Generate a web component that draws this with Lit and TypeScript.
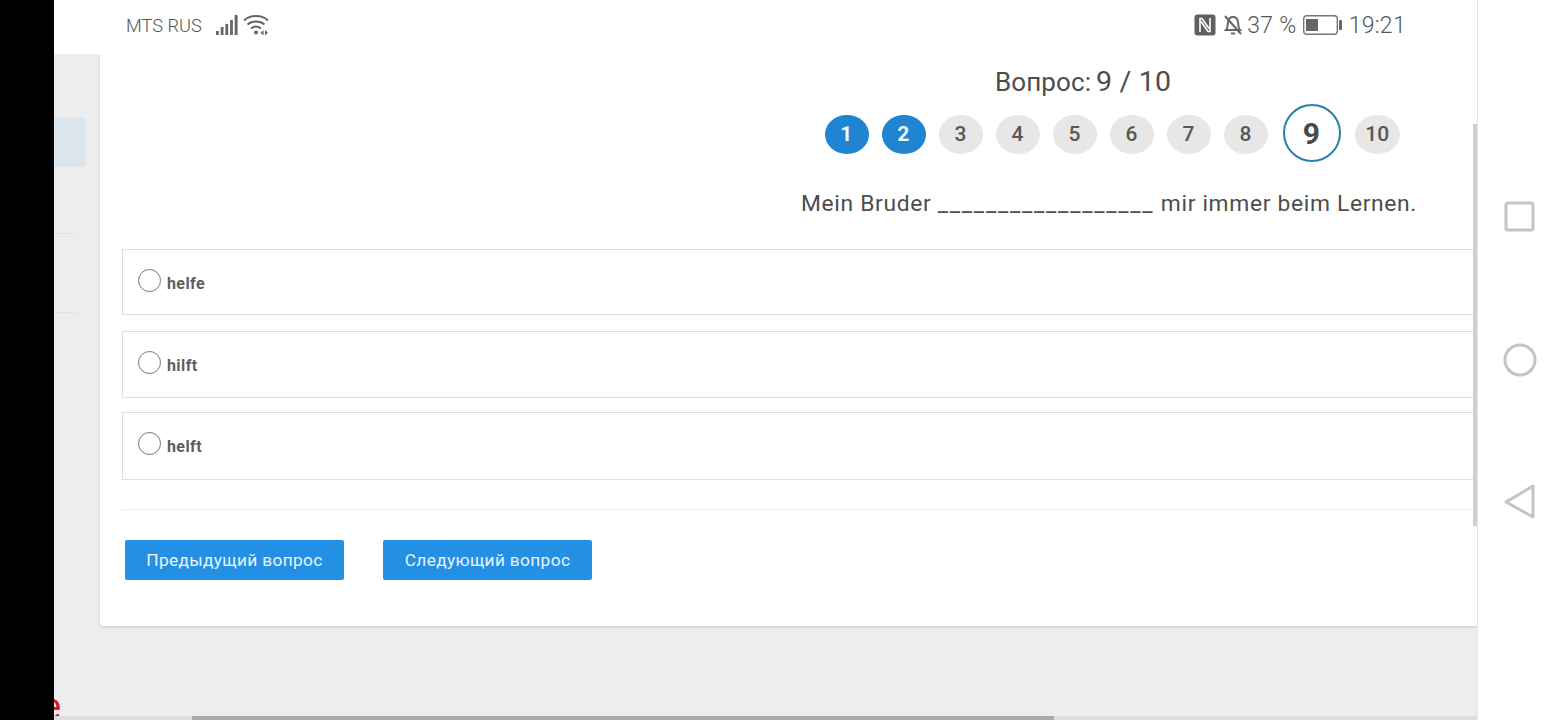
import { LitElement, html, css } from "lit";
import { customElement } from "lit/decorators.js";

@customElement("app-root")
export class AppRoot extends LitElement {
  static styles = css`
    :host { display: flex; width: 1560px; height: 720px; overflow: hidden; background: #fff; font-family: Roboto, "Noto Sans", sans-serif; color: #555; }
    * { box-sizing: border-box; }
    .bezel { width: 54px; flex: none; background: #000; }
    .screen { width: 1423px; flex: none; display: flex; flex-direction: column; position: relative; overflow: hidden; background: #ededed; }
    .nav { flex: 1; border-left: 1px solid #e4e4e4; display: flex; flex-direction: column; align-items: center; padding: 201px 0 0 2px; }
    .nav svg { display: block; flex: none; }
    .nav .circle { margin-top: 110px; }
    .nav .back { margin-top: 107px; }
    .status { height: 54px; flex: none; background: #fff; display: flex; align-items: center; padding: 0 71px 4px 72px; color: #666; font-size: 18px; position: relative; z-index: 1; }
    .carrier { font-size: 18.2px; font-weight: 300; color: #555; margin-right: 13px; }
    .sig { margin-right: 5px; }
    .spacer { flex: 1; }
    .right { display: flex; align-items: center; font-size: 23px; font-weight: 300; color: #555; letter-spacing: .3px; }
    .nfc { margin-right: 7px; }
    .bell { margin-right: 4px; }
    .batt { margin: 0 6px 0 6px; }
    .body { flex: 1; display: flex; min-height: 0; }
    .side { width: 46px; flex: none; display: flex; flex-direction: column; overflow: hidden; }
    .active { width: 32px; height: 49px; margin-top: 64px; background: #dbe6ef; border-radius: 0 4px 4px 0; flex: none; }
    .rule { width: 22px; height: 1px; background: #e2e2e2; flex: none; }
    .r1 { margin-top: 66px; }
    .r2 { margin-top: 78px; }
    .e { margin: auto 0 -5px -12px; color: #d9101a; font-size: 36px; line-height: 36px; }
    .main { flex: 1; min-width: 0; display: flex; flex-direction: column; }
    .card { height: 572px; flex: none; background: #fff; border-radius: 0 0 0 3px; box-shadow: 0 1px 3px rgba(0,0,0,.14); padding: 13px 0 0 22px; display: flex; flex-direction: column; overflow: hidden; }
    .q { margin-left: 873px; font-size: 26px; line-height: 30px; color: #4d4d4d; letter-spacing: .1px; white-space: nowrap; display: flex; gap: 5px; align-items: baseline; }
    .q span { font-size: 28.5px; letter-spacing: .2px; }
    .pager { display: flex; align-items: center; gap: 13.45px; height: 58px; margin: 7px 0 0 703px; }
    .dot { width: 43.6px; height: 39px; margin-top: 2px; border-radius: 50%; background: #e7e7e7; color: #585858; font-size: 21px; font-weight: 500; display: flex; align-items: center; justify-content: center; flex: none; padding-right: 1px; }
    .dot.done { background: #1f84d2; color: #f2f8fc; font-weight: 700; }
    .dot.cur { width: 58px; height: 58px; background: #fff; border: 2px solid #2a80a8; font-size: 30px; font-weight: 700; margin: 0 1px 0 1.6px; color: #4a4a4a; }
    .dot.ten { width: 45px; }
    .sentence { margin: 27px 0 0 679px; font-size: 22.8px; line-height: 30px; letter-spacing: .68px; color: #4d4d4d; white-space: nowrap; }
    .blank { letter-spacing: 1.75px; }
    .opts { margin-top: 30px; display: flex; flex-direction: column; }
    .opt { height: 66px; width: 1400px; border: 1px solid #dedede; display: flex; align-items: flex-start; padding: 19px 0 0 15px; font-size: 16px; font-weight: 700; letter-spacing: .4px; color: #5f5f5f; flex: none; }
    .opt + .opt { margin-top: 16px; }
    .opt.tall { height: 67px; }
    .opt.last { margin-top: 14px; height: 68px; }
    .radio { width: 23px; height: 23px; border: 1.5px solid #777; border-radius: 50%; flex: none; margin-right: 6px; }
    .opt span { margin-top: 6px; line-height: 18px; }
    .hr { height: 1px; background: #ececec; margin-top: 29px; width: 1400px; flex: none; }
    .btns { display: flex; gap: 39px; margin: 30px 0 0 3px; }
    .btn { height: 40px; background: #2490e4; color: #e9f4fc; border-radius: 2px; font-size: 17.3px; letter-spacing: .35px; display: flex; align-items: center; justify-content: center; flex: none; }
    .b1 { width: 219px; }
    .b2 { width: 209px; }
    .vbar { position: absolute; left: 1419px; top: 124px; width: 4px; height: 402px; background: #cfcfcf; z-index: 2; }
    .htrack { position: absolute; left: 0; right: 0; bottom: 0; height: 4px; background: #dedede; }
    .hthumb { position: absolute; left: 138px; width: 862px; top: 0; bottom: 0; background: #a9a9a9; }
  `;

  render() {
    const dots = [1, 2, 3, 4, 5, 6, 7, 8, 9, 10];
    return html`
      <div class="bezel"></div>
      <div class="screen">
        <div class="status">
          <span class="carrier">MTS RUS</span>
          <svg class="sig" width="23" height="22" viewBox="0 0 23 22" fill="#666">
            <rect x="1" y="17" width="2.8" height="4"/><rect x="5.7" y="13" width="2.8" height="8"/><rect x="10.4" y="10" width="2.8" height="11"/><rect x="15.1" y="6" width="2.8" height="15"/><rect x="19.7" y="1" width="2.9" height="20"/>
          </svg>
          <svg width="27" height="22" viewBox="0 0 27 22" fill="none" stroke="#666" stroke-width="2">
            <path d="M1 6.5 C7 0.5 19 0.5 25 6.5"/><path d="M4.5 10.5 C9 6.5 17 6.5 21.5 10.5"/><path d="M8 14.5 C11 12 15 12 18 14.5"/>
            <circle cx="13" cy="18.5" r="2" fill="#666" stroke="none"/>
            <path d="M20.5 16 l-3 2.8 l3 2.8z M22 16 l3 2.8 l-3 2.8z" fill="#666" stroke="none"/>
          </svg>
          <span class="spacer"></span>
          <div class="right">
            <svg class="nfc" width="22" height="22" viewBox="0 0 22 22" fill="none">
              <rect x="0.5" y="0.5" width="21" height="21" rx="3" fill="#5f5f5f"/>
              <path d="M6 18 V4.5 H8 L15 14.5" stroke="#fff" stroke-width="1.6"/>
              <path d="M16 4 V17.5 H14 L7 7.5" stroke="#fff" stroke-width="1.6"/>
            </svg>
            <svg class="bell" width="20" height="22" viewBox="0 0 20 22" fill="none" stroke="#666" stroke-width="2">
              <path d="M3 16 C5 14 4.5 11 5 8 C5.5 4.5 8 3 10 3 C12 3 14.5 4.5 15 8 C15.5 11 15 14 17 16z"/>
              <path d="M8 19.5 h4"/><path d="M2 2 L18 20"/>
            </svg>
            <span>37 %</span>
            <svg class="batt" width="40" height="20" viewBox="0 0 40 20" fill="none">
              <rect x="0.7" y="0.7" width="33.6" height="18.6" rx="3" stroke="#777" stroke-width="1.4"/>
              <rect x="3" y="4" width="12" height="12" fill="#666"/>
              <rect x="36" y="5" width="3" height="10" rx="1" fill="#666"/>
            </svg>
            <span>19:21</span>
          </div>
        </div>
        <div class="body">
          <div class="side">
            <div class="active"></div>
            <div class="rule r1"></div>
            <div class="rule r2"></div>
            <div class="e">e</div>
          </div>
          <div class="main">
            <div class="card">
              <div class="q">Вопрос:<span>9 / 10</span></div>
              <div class="pager">
                ${dots.map(
                  (d) => html`<div class="dot ${d <= 2 ? "done" : ""} ${d === 9 ? "cur" : ""} ${d === 10 ? "ten" : ""}">${d}</div>`
                )}
              </div>
              <div class="sentence">Mein Bruder <span class="blank">__________________</span> mir immer beim Lernen.</div>
              <div class="opts">
                <div class="opt"><i class="radio"></i><span>helfe</span></div>
                <div class="opt tall"><i class="radio"></i><span>hilft</span></div>
                <div class="opt tall last"><i class="radio"></i><span>helft</span></div>
              </div>
              <div class="hr"></div>
              <div class="btns">
                <div class="btn b1">Предыдущий вопрос</div>
                <div class="btn b2">Следующий вопрос</div>
              </div>
            </div>
          </div>
        </div>
        <div class="vbar"></div>
        <div class="htrack"><div class="hthumb"></div></div>
      </div>
      <div class="nav">
        <svg width="32" height="32" viewBox="0 0 32 32" fill="none" stroke="#c4c4c4" stroke-width="3"><rect x="2" y="2" width="27" height="27" rx="2"/></svg>
        <svg class="circle" width="34" height="34" viewBox="0 0 34 34" fill="none" stroke="#c4c4c4" stroke-width="3"><circle cx="17" cy="17" r="15"/></svg>
        <svg class="back" width="32" height="36" viewBox="0 0 32 36" fill="none" stroke="#c4c4c4" stroke-width="3" stroke-linejoin="round"><path d="M29 2 V33 L2 18z"/></svg>
      </div>
    `;
  }
}
